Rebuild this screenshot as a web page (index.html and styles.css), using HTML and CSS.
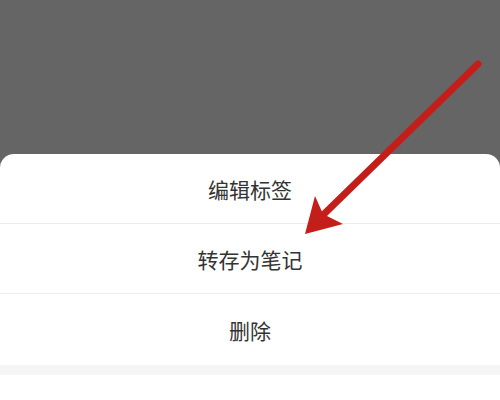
FILE: index.html
```html
<!DOCTYPE html>
<html lang="zh-CN">
<head>
  <meta charset="UTF-8">
  <title>操作菜单</title>
  <link rel="stylesheet" href="styles.css">
</head>
<body>
  <div class="mask"></div>

  <div class="sheet">
    <div class="sheet-item">编辑标签</div>
    <div class="sheet-item">转存为笔记</div>
    <div class="sheet-item">删除</div>
    <div class="sheet-gap"></div>
    <div class="sheet-cancel"></div>
  </div>

  <!-- annotation arrow -->
  <svg class="arrow" width="500" height="400" viewBox="0 0 500 400">
    <line x1="478" y1="64" x2="322" y2="216" stroke="#c41e1a" stroke-width="7" stroke-linecap="round"/>
    <polygon points="305,234 315,196 323,214 343,224" fill="#c41e1a"/>
  </svg>
</body>
</html>
```

FILE: styles.css
```css
html, body {
  margin: 0;
  height: 100%;
}
body {
  font-family: "Noto Sans CJK SC", "Noto Sans", sans-serif;
  background: #656565;
  display: flex;
  flex-direction: column;
  overflow: hidden;
  position: relative;
}
.mask {
  height: 154px;
  flex-shrink: 0;
}
.sheet {
  flex: 1;
  background: #fff;
  border-radius: 14px 14px 0 0;
  display: flex;
  flex-direction: column;
}
.sheet-item {
  height: 70px;
  display: flex;
  align-items: center;
  justify-content: center;
  font-size: 21px;
  color: #333;
  border-bottom: 1px solid #ededed;
  box-sizing: border-box;
}
.sheet-item:nth-child(3) {
  height: 71px;
  border-bottom: none;
}
.sheet-gap {
  height: 10px;
  background: #f5f5f5;
}
.sheet-cancel {
  flex: 1;
}
.arrow {
  position: absolute;
  left: 0;
  top: 0;
}
```
